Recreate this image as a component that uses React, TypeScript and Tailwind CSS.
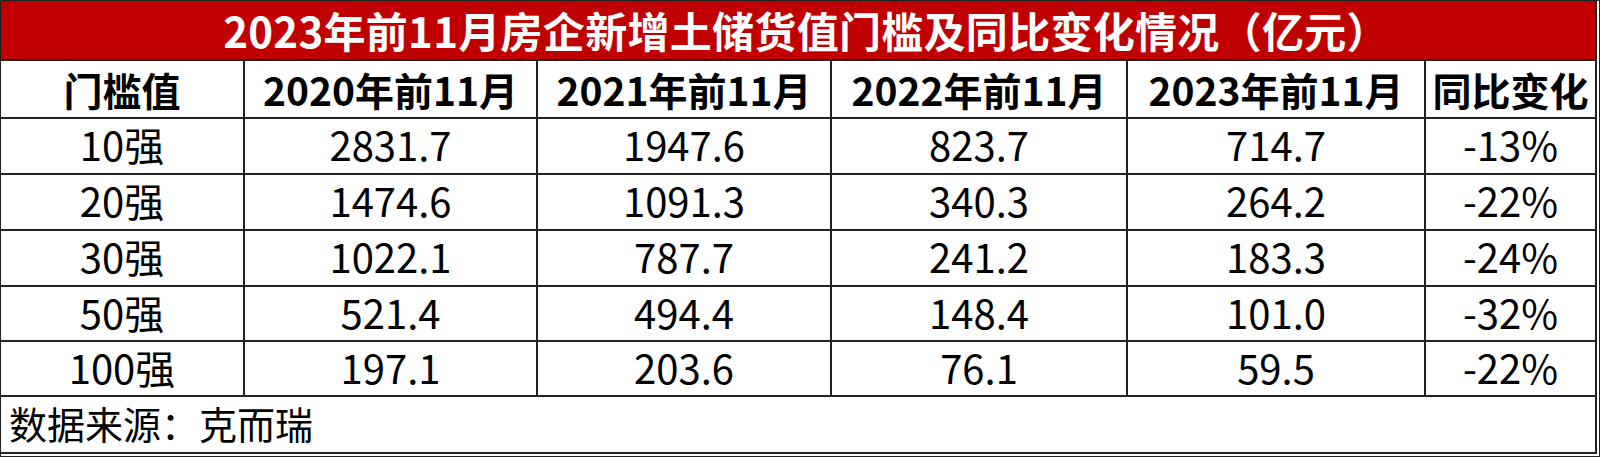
const rows = [
  ["10强", "2831.7", "1947.6", "823.7", "714.7", "-13%"],
  ["20强", "1474.6", "1091.3", "340.3", "264.2", "-22%"],
  ["30强", "1022.1", "787.7", "241.2", "183.3", "-24%"],
  ["50强", "521.4", "494.4", "148.4", "101.0", "-32%"],
  ["100强", "197.1", "203.6", "76.1", "59.5", "-22%"],
];

const headers = ["门槛值", "2020年前11月", "2021年前11月", "2022年前11月", "2023年前11月", "同比变化"];
const rowHeights = ["h-[56px]", "h-[56px]", "h-[56px]", "h-[55px]", "h-[55px]"];

export default function App() {
  return (
    <div
      className="w-[1600px] h-[457px] bg-white border border-[#222] pr-[2px] pb-[2px] text-black"
      style={{ fontFamily: '"Noto Sans CJK SC", "Noto Sans", sans-serif' }}
    >
      <div className="h-full flex flex-col border-r-2 border-b-2 border-[#222]">
        {/* title bar */}
        <div className="h-[60px] shrink-0 bg-[#c00000] border-b-2 border-[#222] flex items-center justify-center pl-[16px] text-white text-[42px] font-bold leading-none tracking-[0.3px]">
          2023年前11月房企新增土储货值门槛及同比变化情况（亿元）
        </div>

        <div className="grid grid-cols-[244px_293px_294px_296px_298px_1fr]">
          {headers.map((h, i) => (
            <div
              key={h}
              className={`h-[58px] flex items-center justify-center border-b-2 border-[#222] text-[39px] font-bold leading-none ${
                i < 5 ? "border-r-2" : ""
              }`}
            >
              {h}
            </div>
          ))}
          {rows.map((row, r) =>
            row.map((cell, i) => (
              <div
                key={r + "-" + i}
                className={`${rowHeights[r]} flex items-center justify-center border-b-2 border-[#222] text-[40px] leading-none pb-[4px] ${
                  i < 5 ? "border-r-2" : ""
                }`}
              >
                {cell}
              </div>
            ))
          )}
        </div>

        {/* source note */}
        <div className="flex-1 flex items-center pl-[8px] pb-[4px] text-[38px] leading-none">
          数据来源：克而瑞
        </div>
      </div>
    </div>
  );
}
